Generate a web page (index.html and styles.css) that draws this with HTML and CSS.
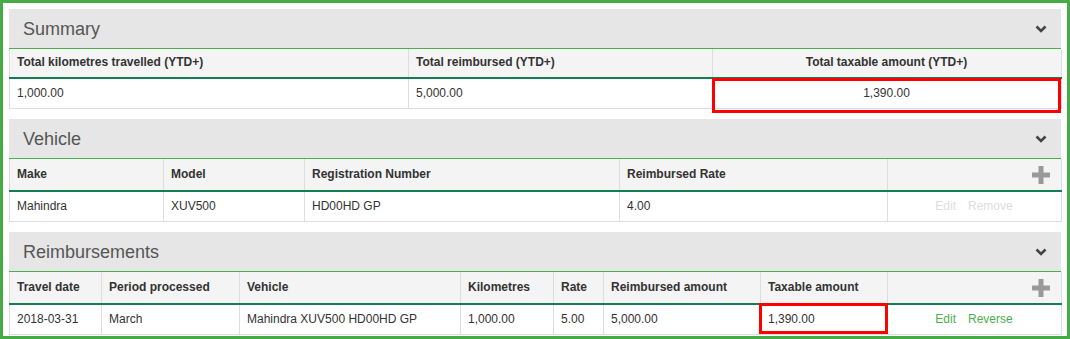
FILE: index.html
```html
<!DOCTYPE html>
<html lang="en">
<head>
    <meta charset="UTF-8">
    <meta name="viewport" content="width=device-width, initial-scale=1.0">
    <title>Travel reimbursements</title>
    <link rel="stylesheet" href="styles.css">
</head>
<body>
    <div class="frame">
        <section class="panel">
            <div class="panel-head">
                <h2>Summary</h2>
                <svg class="chevron" width="12" height="8" viewBox="0 0 12 8"><polyline points="1.5,1.5 6,6 10.5,1.5" /></svg>
            </div>
            <table class="grid summary">
                <colgroup><col style="width:399px"><col style="width:304px"><col style="width:349px"></colgroup>
                <thead>
                    <tr>
                        <th>Total kilometres travelled (YTD+)</th>
                        <th>Total reimbursed (YTD+)</th>
                        <th class="center">Total taxable amount (YTD+)</th>
                    </tr>
                </thead>
                <tbody>
                    <tr>
                        <td>1,000.00</td>
                        <td>5,000.00</td>
                        <td class="center marked">1,390.00<span class="mark mark-summary"></span></td>
                    </tr>
                </tbody>
            </table>
        </section>

        <section class="panel">
            <div class="panel-head">
                <h2>Vehicle</h2>
                <svg class="chevron" width="12" height="8" viewBox="0 0 12 8"><polyline points="1.5,1.5 6,6 10.5,1.5" /></svg>
            </div>
            <table class="grid tall">
                <colgroup><col style="width:154px"><col style="width:141px"><col style="width:315px"><col style="width:268px"><col style="width:174px"></colgroup>
                <thead>
                    <tr>
                        <th>Make</th>
                        <th>Model</th>
                        <th>Registration Number</th>
                        <th>Reimbursed Rate</th>
                        <th class="add"><svg width="18" height="18" viewBox="0 0 18 18"><rect x="6.5" y="0" width="5" height="18" /><rect x="0" y="6.5" width="18" height="5" /></svg></th>
                    </tr>
                </thead>
                <tbody>
                    <tr>
                        <td>Mahindra</td>
                        <td>XUV500</td>
                        <td>HD00HD GP</td>
                        <td>4.00</td>
                        <td class="center actions"><a class="off">Edit</a><a class="off">Remove</a></td>
                    </tr>
                </tbody>
            </table>
        </section>

        <section class="panel">
            <div class="panel-head">
                <h2>Reimbursements</h2>
                <svg class="chevron" width="12" height="8" viewBox="0 0 12 8"><polyline points="1.5,1.5 6,6 10.5,1.5" /></svg>
            </div>
            <table class="grid tall">
                <colgroup><col style="width:92px"><col style="width:138px"><col style="width:221px"><col style="width:93px"><col style="width:50px"><col style="width:157px"><col style="width:127px"><col style="width:174px"></colgroup>
                <thead>
                    <tr>
                        <th>Travel date</th>
                        <th>Period processed</th>
                        <th>Vehicle</th>
                        <th>Kilometres</th>
                        <th>Rate</th>
                        <th>Reimbursed amount</th>
                        <th>Taxable amount</th>
                        <th class="add"><svg width="18" height="18" viewBox="0 0 18 18"><rect x="6.5" y="0" width="5" height="18" /><rect x="0" y="6.5" width="18" height="5" /></svg></th>
                    </tr>
                </thead>
                <tbody>
                    <tr>
                        <td>2018-03-31</td>
                        <td>March</td>
                        <td>Mahindra XUV500 HD00HD GP</td>
                        <td>1,000.00</td>
                        <td>5.00</td>
                        <td>5,000.00</td>
                        <td class="marked">1,390.00<span class="mark mark-row"></span></td>
                        <td class="center actions"><a href="#">Edit</a><a href="#">Reverse</a></td>
                    </tr>
                </tbody>
            </table>
        </section>
    </div>
</body>
</html>
```

FILE: styles.css
```css
html, body {
    margin: 0;
    padding: 0;
    background-color: white;
}
body {
    font-family: 'Liberation Sans', Arial, sans-serif;
    font-size: 12px;
    color: #333;
}
.frame {
    box-sizing: border-box;
    height: 339px;
    border: 3px solid #45ab45;
    padding: 6px 6px 0 6px;
    display: flex;
    flex-direction: column;
    gap: 10px;
    overflow: hidden;
}
.panel-head {
    height: 39px;
    background-color: #e6e6e6;
    border-bottom: 1px solid #4cae4c;
    display: flex;
    align-items: center;
    justify-content: space-between;
    padding: 0 14px 0 14px;
}
.panel-head h2 {
    margin: 0;
    font-size: 18px;
    font-weight: normal;
    color: #555;
    line-height: 20px;
}
.chevron polyline {
    fill: none;
    stroke: #444;
    stroke-width: 2.6;
}
.grid {
    width: 100%;
    table-layout: fixed;
    border-collapse: collapse;
    border: 1px solid #ddd;
    border-top: none;
}
.grid th, .grid td {
    text-align: left;
    padding: 6px 8px 6px 7px;
    line-height: 17px;
    border-left: 1px solid #ddd;
    border-right: 1px solid #ddd;
    white-space: nowrap;
}
.grid th {
    font-weight: bold;
    background-color: #f4f4f4;
    border-bottom: 2px solid #137d54;
}
.summary th {
    padding: 5px 8px 6px 7px;
}
.tall th {
    padding: 7px 8px 7px 7px;
}
.grid td {
    border-bottom: 1px solid #ddd;
}
.grid .center {
    text-align: center;
}
.grid th.add {
    padding: 6px 11px;
}
.add svg {
    display: block;
    margin-left: auto;
    fill: #999;
}
.actions a {
    color: #4cae4c;
    text-decoration: none;
    margin: 0 6px;
}
.actions a.off {
    color: #ddd;
}
.marked {
    position: relative;
}
.mark {
    position: absolute;
    border: 3px solid #ff0000;
    pointer-events: none;
}
.mark-summary {
    top: -1px;
    left: -1px;
    right: 0;
    bottom: -5px;
}
.mark-row {
    top: -2px;
    left: -2px;
    right: -1px;
    bottom: 0;
}
```
